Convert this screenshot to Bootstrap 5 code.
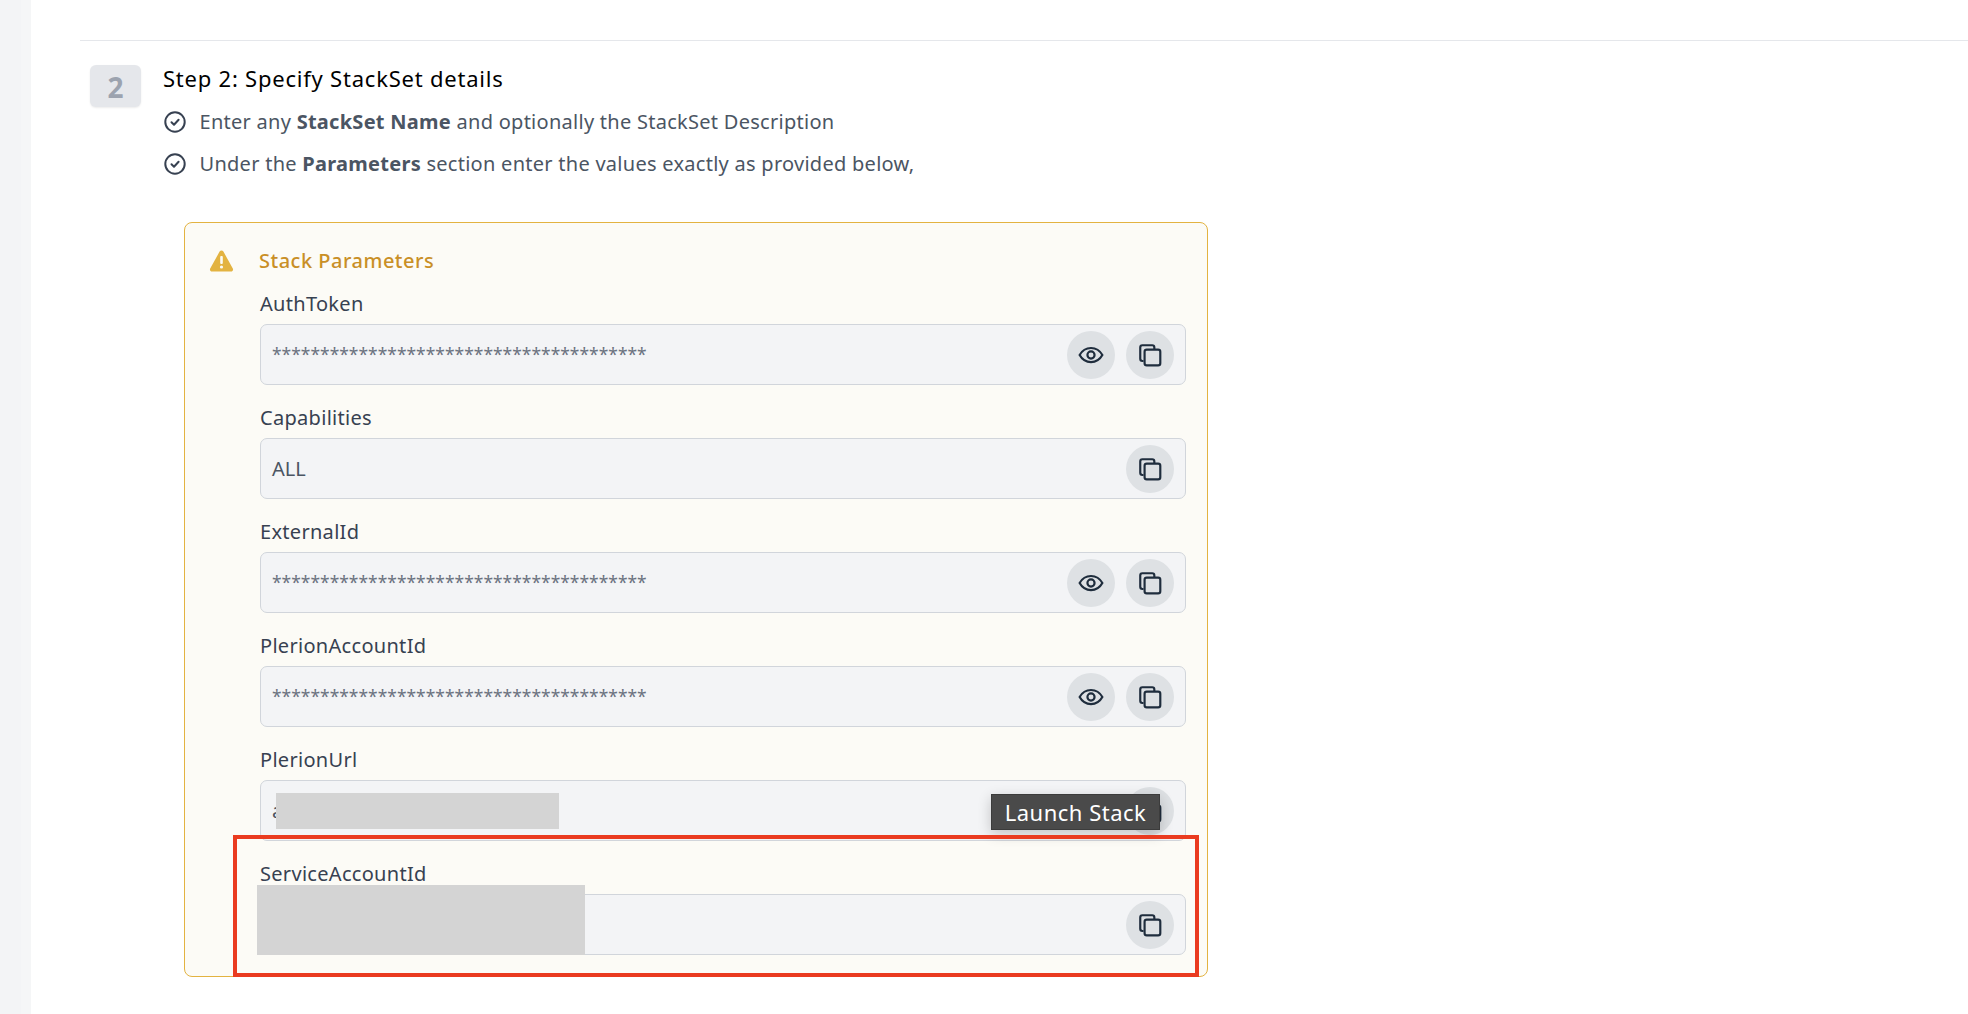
<!DOCTYPE html>
<html lang="en"><head><meta charset="utf-8"><title>Step 2</title>
<link href="https://cdn.jsdelivr.net/npm/bootstrap@5.3.0/dist/css/bootstrap.min.css" rel="stylesheet">
<style>
html,body{height:1014px;overflow:hidden;background:#fff}
body{font-family:"Noto Sans",sans-serif;color:#4b5563}
.shell{height:1014px}
.rail{width:31px;flex:none;background:#f3f4f6;border-right:10px solid #f5f6f7}
.main{padding:40px 0 0 49px;min-width:0}
.topline{border-top:1px solid #e5e7eb;height:25px}
.stepbadge{width:51px;height:42px;margin-left:10px;margin-right:22px;background:#e5e7eb;border-radius:6px;color:#9ca3af;font-size:28px;font-weight:700;line-height:44px;text-align:center;box-shadow:0 1px 2px rgba(0,0,0,.08);flex:none}
.steptitle{font-size:22px;line-height:26px;color:#000;margin:0 0 10px;font-weight:400;letter-spacing:.78px}
.bullet{font-size:20px;line-height:24px;height:42px;gap:13.500px;margin-left:1px;white-space:nowrap;letter-spacing:.27px}
.bullet b{color:#4b5563;font-weight:700}
.pbox{position:relative;width:1024px;height:755px;margin:37px 0 0 21px;padding:22px 21px 0 25px;background:#fcfbf6;border:1px solid #e3b341;border-radius:8px}
.ptitle{font-size:20px;line-height:24px;font-weight:500;color:#c98f26;gap:25px;height:32px;margin-bottom:15px;letter-spacing:.5px}
.ptitle svg{margin-left:-1px}
.pbody{margin-left:50px}
.flabel{font-size:20px;line-height:24px;color:#374151;height:32px;letter-spacing:.3px}
.fbox{height:61px;margin-bottom:21px;padding:0 11px;background:#f3f4f6;border:1px solid #d1d5db;border-radius:7px;gap:11px;font-size:20px;color:#4b5563}
.masked{font-size:17.450px;color:#6b7280}
.rbtn{width:48px;height:48px;background:#dee1e4;border-radius:50%;flex:none}
.rbtn svg{width:26px;height:26px;stroke:#1f2d3d;stroke-width:2;fill:none}
.redact{position:absolute;background:#d4d4d4}
.r1{left:91px;top:570px;width:283px;height:36px}
.r2{left:72px;top:662px;width:328px;height:70px}
.tipbox{position:absolute;left:806px;top:571px;width:169px;height:36px;background:#4a4a4a;color:#fff;font-size:22px;line-height:34px;text-align:center;border:1px solid #3c3c3c;box-shadow:0 4px 14px rgba(0,0,0,.2);white-space:nowrap;letter-spacing:.5px}
.redframe{position:absolute;left:48px;top:612px;width:966px;height:142px;border:4px solid #ea3b20}
</style></head>
<body>
<div class="d-flex shell">
<div class="rail"></div>
<div class="main flex-grow-1">
<div class="topline"></div>
<div class="d-flex align-items-start">
<div class="stepbadge">2</div>
<div class="flex-grow-1">
<h2 class="steptitle">Step 2: Specify StackSet details</h2>
<div class="bullet d-flex align-items-center"><svg width="22" height="22" viewBox="0 0 22 22" fill="none" stroke="#374151" stroke-width="2"><circle cx="11" cy="11" r="9.7"/><path d="M7.5 11.3l2.5 2.4 4.6-5" stroke-linecap="round" stroke-linejoin="round"/></svg><span>Enter any <b>StackSet Name</b> and optionally the StackSet Description</span></div>
<div class="bullet d-flex align-items-center"><svg width="22" height="22" viewBox="0 0 22 22" fill="none" stroke="#374151" stroke-width="2"><circle cx="11" cy="11" r="9.7"/><path d="M7.5 11.3l2.5 2.4 4.6-5" stroke-linecap="round" stroke-linejoin="round"/></svg><span>Under the <b>Parameters</b> section enter the values exactly as provided below,</span></div>
<div class="pbox">
<div class="ptitle d-flex align-items-center"><svg width="25" height="24" viewBox="0 0 25 24"><path d="M12.5 1.5c-.8 0-1.500.4-1.900 1.100L1.200 19.400c-.8 1.400.2 3.100 1.900 3.100h18.800c1.700 0 2.700-1.700 1.900-3.100L14.400 2.600c-.4-.7-1.100-1.100-1.900-1.100z" fill="#e3b341"/><rect x="11.200" y="7" width="2.600" height="8" rx="1" fill="#fcfbf6"/><circle cx="12.500" cy="18" r="1.600" fill="#fcfbf6"/></svg><span>Stack Parameters</span></div>
<div class="pbody">
<div class="flabel">AuthToken</div>
<div class="fbox d-flex align-items-center"><span class="masked flex-grow-1">***************************************</span>
<div class="rbtn d-flex align-items-center justify-content-center"><svg viewBox="0 0 24 24"><path d="M1.500 12C4 7.500 7.800 5.500 12 5.500S20 7.500 22.500 12C20 16.500 16.200 18.500 12 18.500S4 16.500 1.500 12z"/><circle cx="12" cy="12" r="3.300"/></svg></div>
<div class="rbtn d-flex align-items-center justify-content-center"><svg viewBox="0 0 24 24"><path d="M6 17.500H5a2 2 0 0 1-2-2V5a2 2 0 0 1 2-2h9a2 2 0 0 1 2 2v1.500"/><rect x="7" y="7" width="14.500" height="14.500" rx="2"/></svg></div></div>
<div class="flabel">Capabilities</div>
<div class="fbox d-flex align-items-center"><span class="flex-grow-1">ALL</span>
<div class="rbtn d-flex align-items-center justify-content-center"><svg viewBox="0 0 24 24"><path d="M6 17.500H5a2 2 0 0 1-2-2V5a2 2 0 0 1 2-2h9a2 2 0 0 1 2 2v1.500"/><rect x="7" y="7" width="14.500" height="14.500" rx="2"/></svg></div></div>
<div class="flabel">ExternalId</div>
<div class="fbox d-flex align-items-center"><span class="masked flex-grow-1">***************************************</span>
<div class="rbtn d-flex align-items-center justify-content-center"><svg viewBox="0 0 24 24"><path d="M1.500 12C4 7.500 7.800 5.500 12 5.500S20 7.500 22.500 12C20 16.500 16.200 18.500 12 18.500S4 16.500 1.500 12z"/><circle cx="12" cy="12" r="3.300"/></svg></div>
<div class="rbtn d-flex align-items-center justify-content-center"><svg viewBox="0 0 24 24"><path d="M6 17.500H5a2 2 0 0 1-2-2V5a2 2 0 0 1 2-2h9a2 2 0 0 1 2 2v1.500"/><rect x="7" y="7" width="14.500" height="14.500" rx="2"/></svg></div></div>
<div class="flabel">PlerionAccountId</div>
<div class="fbox d-flex align-items-center"><span class="masked flex-grow-1">***************************************</span>
<div class="rbtn d-flex align-items-center justify-content-center"><svg viewBox="0 0 24 24"><path d="M1.500 12C4 7.500 7.800 5.500 12 5.500S20 7.500 22.500 12C20 16.500 16.200 18.500 12 18.500S4 16.500 1.500 12z"/><circle cx="12" cy="12" r="3.300"/></svg></div>
<div class="rbtn d-flex align-items-center justify-content-center"><svg viewBox="0 0 24 24"><path d="M6 17.500H5a2 2 0 0 1-2-2V5a2 2 0 0 1 2-2h9a2 2 0 0 1 2 2v1.500"/><rect x="7" y="7" width="14.500" height="14.500" rx="2"/></svg></div></div>
<div class="flabel">PlerionUrl</div>
<div class="fbox d-flex align-items-center"><span class="flex-grow-1">a</span>
<div class="rbtn d-flex align-items-center justify-content-center"><svg viewBox="0 0 24 24"><path d="M6 17.500H5a2 2 0 0 1-2-2V5a2 2 0 0 1 2-2h9a2 2 0 0 1 2 2v1.500"/><rect x="7" y="7" width="14.500" height="14.500" rx="2"/></svg></div></div>
<div class="flabel">ServiceAccountId</div>
<div class="fbox d-flex align-items-center"><span class="flex-grow-1"></span>
<div class="rbtn d-flex align-items-center justify-content-center"><svg viewBox="0 0 24 24"><path d="M6 17.500H5a2 2 0 0 1-2-2V5a2 2 0 0 1 2-2h9a2 2 0 0 1 2 2v1.500"/><rect x="7" y="7" width="14.500" height="14.500" rx="2"/></svg></div></div>
</div>
<div class="redact r1"></div>
<div class="redact r2"></div>
<div class="tipbox">Launch Stack</div>
<div class="redframe"></div>
</div>
</div>
</div>
</div>
</div>
</body></html>
